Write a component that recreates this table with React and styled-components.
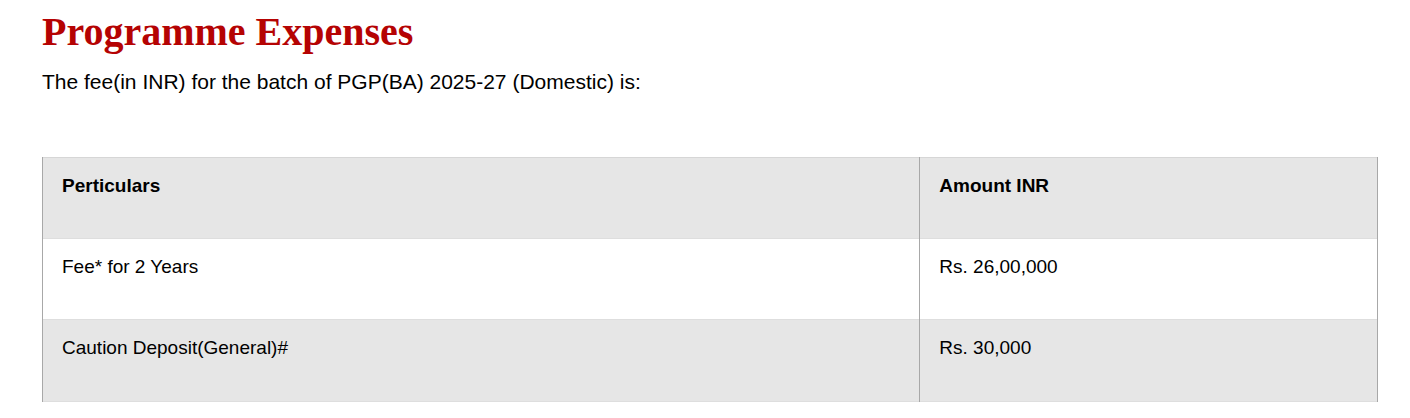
import React from 'react'
import styled, { createGlobalStyle } from 'styled-components'

const GlobalStyle = createGlobalStyle`
body {
  margin: 0;
  background: #ffffff;
}
`;

const Page = styled.div`
padding: 8px 32px 0 42px;
font-family: "Liberation Sans", Arial, sans-serif;
color: #000;
`;

const Title = styled.h2`
margin: 0;
font-family: "Liberation Serif", "Times New Roman", serif;
font-weight: bold;
font-size: 40px;
line-height: 48px;
color: #b50303;
`;

const Intro = styled.p`
margin: 14px 0 0 0;
font-size: 21px;
line-height: 24px;
`;

const Table = styled.table`
margin-top: 63px;
width: 1336px;
border-collapse: collapse;
border-top: 1px solid #d6d6d6;
`;

const Row = styled.tr`
background: ${p => (p.$shaded ? '#e6e6e6' : '#ffffff')};
border-bottom: 1px solid #dedede;
`;

const Cell = styled.td`
width: ${p => p.$w}px;
height: ${p => p.$h}px;
box-sizing: border-box;
padding: 17px 19px 0 19px;
vertical-align: top;
font-size: 19px;
line-height: 22px;
font-weight: ${p => (p.$head ? 'bold' : 'normal')};
border-left: 1px solid #a8a8a8;
border-right: 1px solid #a8a8a8;
`;

const rows = [
  ['Perticulars', 'Amount INR', true, 81],
  ['Fee* for 2 Years', 'Rs. 26,00,000', false, 81],
  ['Caution Deposit(General)#', 'Rs. 30,000', true, 82],
]

function App() {
  return (
    <Page>
      <GlobalStyle />
      <Title>Programme Expenses</Title>
      <Intro>The fee(in INR) for the batch of PGP(BA) 2025-27 (Domestic) is:</Intro>
      <Table>
        <tbody>
          {rows.map(([name, amount, shaded, h], i) => (
            <Row key={name} $shaded={shaded}>
              <Cell $w={878} $h={h} $head={i === 0}>{name}</Cell>
              <Cell $w={458} $h={h} $head={i === 0}>{amount}</Cell>
            </Row>
          ))}
        </tbody>
      </Table>
    </Page>
  )
}

export default App
